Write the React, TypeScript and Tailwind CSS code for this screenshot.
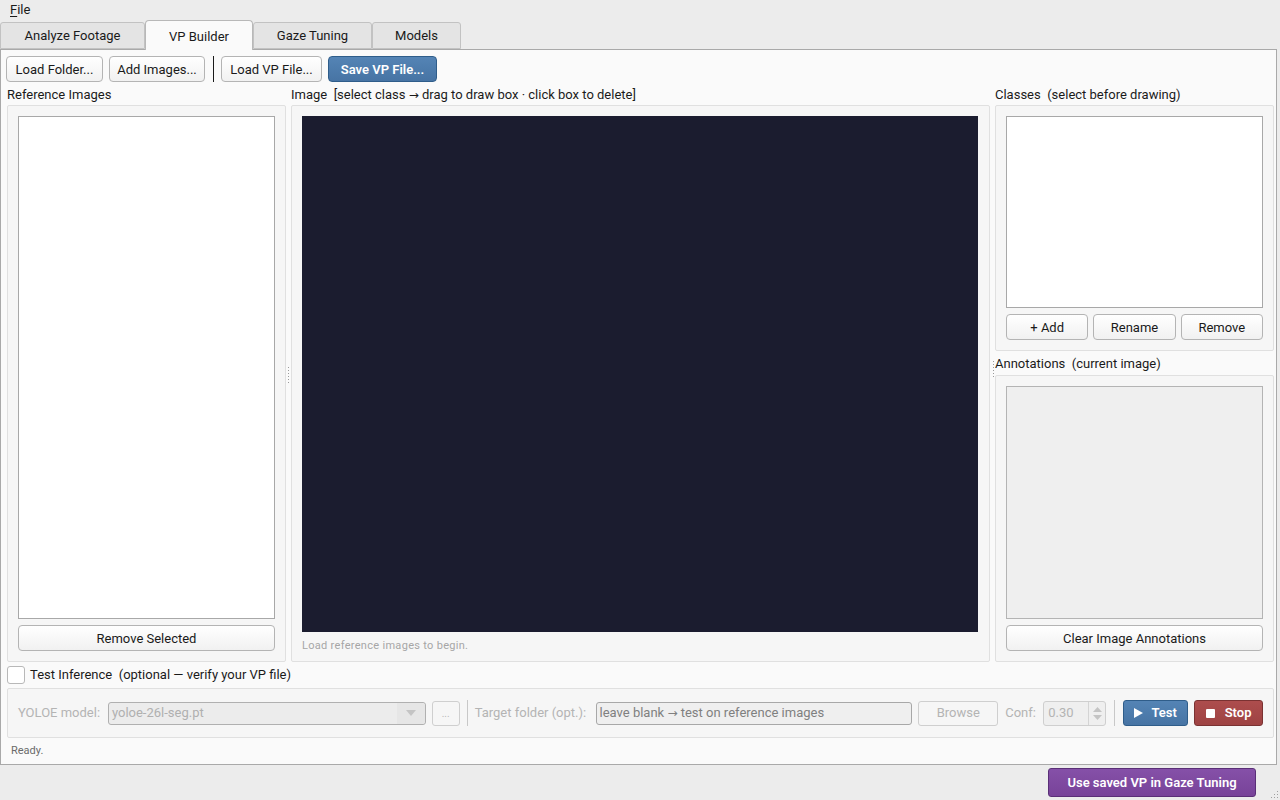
import React from 'react';

const btn =
  'h-[26px] px-[9px] shrink-0 rounded-[4px] border border-[#b4b4b4] bg-gradient-to-b from-white to-[#f1f1f1] text-[13px] text-[#1a1a1a] flex items-center justify-center leading-none whitespace-nowrap';

function Arrow() {
  return <span style={{ fontFamily: '"DejaVu Sans", sans-serif' }} className="text-[12px]">→</span>;
}

function Tab({ label, active, width }: { label: string; active?: boolean; width: string }) {
  return active ? (
    <div className={`${width} h-[30px] -mb-px bg-[#fafafa] border border-b-0 border-[#b8b8b8] rounded-t-[4px] flex items-center justify-center pt-[2px] text-[13px] text-[#1a1a1a] z-10`}>
      {label}
    </div>
  ) : (
    <div className={`${width} h-[27px] bg-[#e4e4e4] border border-[#c2c2c2] rounded-t-[3px] flex items-center justify-center pt-[1px] text-[13px] text-[#1a1a1a]`}>
      {label}
    </div>
  );
}

function Dots() {
  return (
    <div className="flex flex-col gap-[2px]">
      {[0, 1, 2, 3, 4, 5].map((i) => (
        <div key={i} className="w-px h-px bg-[#9a9a9a]" />
      ))}
    </div>
  );
}

export default function App() {
  return (
    <div
      className="w-[1280px] h-[800px] bg-[#ececec] flex flex-col text-[#1a1a1a] text-[13px] whitespace-nowrap"
      style={{ fontFamily: 'Roboto, "Liberation Sans", sans-serif' }}
    >
      {/* Menu bar */}
      <div className="h-[20px] flex items-center px-[10px] text-[13px]">
        <span>
          <span className="underline underline-offset-2">F</span>ile
        </span>
      </div>

      {/* Tabs */}
      <div className="h-[29px] flex items-end">
        <Tab label="Analyze Footage" width="w-[145px]" />
        <Tab label="VP Builder" width="w-[108px]" active />
        <Tab label="Gaze Tuning" width="w-[119px]" />
        <Tab label="Models" width="w-[89px]" />
      </div>

      {/* Tab pane */}
      <div className="w-[1277px] h-[716px] border border-[#a9a9a9] bg-[#fafafa] flex flex-col pl-[6px] pr-[2px]">
        {/* Toolbar */}
        <div className="h-[32px] pt-[6px] -ml-px flex items-start gap-[6px]">
          <button className={`${btn} w-[97px]`}>Load Folder...</button>
          <button className={`${btn} w-[96px]`}>Add Images...</button>
          <div className="w-px h-[26px] bg-[#1a1a1a] ml-[2px] mr-[1px]" />
          <button className={`${btn} w-[101px]`}>Load VP File...</button>
          <button className="h-[26px] w-[109px] rounded-[4px] border border-[#2f5d8a] bg-gradient-to-b from-[#5484b5] to-[#4774a4] text-white font-semibold text-[13px] leading-none">
            Save VP File...
          </button>
        </div>

        {/* Main panels */}
        <div className="flex h-[580px] pt-[5px]">
          {/* Left */}
          <div className="w-[279px] flex flex-col">
            <div className="h-[16px] leading-[16px]">Reference Images</div>
            <div className="mt-[2px] flex-1 border border-[#e0e0e0] rounded-[2px] bg-[#f6f6f6] p-[10px] flex flex-col">
              <div className="flex-1 bg-white border border-[#a8a8a8]" />
              <button className={`${btn} mt-[6px] w-full`}>Remove Selected</button>
            </div>
          </div>

          {/* Splitter */}
          <div className="w-[5px] flex items-center justify-center">
            <Dots />
          </div>

          {/* Center */}
          <div className="w-[699px] flex flex-col">
            <div className="h-[16px] leading-[16px] whitespace-pre">
              Image  [select class <Arrow /> drag to draw box · click box to delete]
            </div>
            <div className="mt-[2px] flex-1 border border-[#e0e0e0] rounded-[2px] bg-[#f6f6f6] pt-[10px] pl-[10px] pr-[11px] flex flex-col">
              <div className="w-[676px] h-[516px] bg-[#1b1c2f]" />
              <div className="mt-[6px] text-[11px] text-[#a6a6a6] tracking-[0.3px]">Load reference images to begin.</div>
            </div>
          </div>

          {/* Splitter */}
          <div className="w-[5px]" />

          {/* Right */}
          <div className="w-[279px] flex flex-col">
            <div className="h-[16px] leading-[16px] whitespace-pre">Classes  (select before drawing)</div>
            <div className="mt-[2px] h-[246px] border border-[#e0e0e0] rounded-[2px] bg-[#f6f6f6] p-[10px] flex flex-col">
              <div className="flex-1 bg-white border border-[#a8a8a8]" />
              <div className="mt-[6px] flex gap-[5px]">
                <button className={`${btn} flex-1`}>+ Add</button>
                <button className={`${btn} flex-1`}>Rename</button>
                <button className={`${btn} flex-1`}>Remove</button>
              </div>
            </div>
            <div className="h-[16px] mt-[5px] leading-[16px] whitespace-pre relative">
              <div className="absolute -left-[2px] top-[5px]">
                <Dots />
              </div>
              Annotations  (current image)
            </div>
            <div className="mt-[3px] flex-1 border border-[#e0e0e0] rounded-[2px] bg-[#f6f6f6] p-[10px] flex flex-col">
              <div className="flex-1 bg-[#efefef] border border-[#b4b4b4]" />
              <button className={`${btn} mt-[6px] w-full`}>Clear Image Annotations</button>
            </div>
          </div>
        </div>

        {/* Test inference checkbox */}
        <div className="h-[26px] flex items-center gap-[5px]">
          <div className="w-[18px] h-[18px] bg-white border border-[#b8b8b8] rounded-[3px]" />
          <span className="whitespace-pre">Test Inference  (optional — verify your VP file)</span>
        </div>

        {/* Inference group */}
        <div className="w-[1267px] h-[50px] border border-[#e0e0e0] rounded-[2px] bg-[#f6f6f6] px-[10px] flex items-center">
          <span className="w-[90px] text-[#b4b4b4]">YOLOE model:</span>
          <div className="w-[318px] h-[23px] border border-[#b0b0b0] rounded-[3px] bg-[#ececec] flex items-center">
            <span className="flex-1 pl-[3px] text-[#b0b0b0]">yoloe-26l-seg.pt</span>
            <div className="w-[28px] h-full flex items-center justify-center bg-[#e6e6e6] rounded-r-[3px]">
              <svg width="10" height="6" viewBox="0 0 10 6">
                <path d="M0 0 L10 0 L5 6 Z" fill="#c4c4c4" />
              </svg>
            </div>
          </div>
          <div className="ml-[6px] w-[28px] h-[25px] border border-[#cfcfcf] rounded-[3px] bg-[#f6f6f6] flex items-center justify-center text-[#b8b8b8] text-[10px]">
            ...
          </div>
          <div className="mx-[7px] w-px h-[26px] bg-[#c8c8c8]" />
          <span className="w-[121px] text-[#b4b4b4]">Target folder (opt.):</span>
          <div className="w-[317px] h-[23px] border border-[#a8a8a8] rounded-[3px] bg-[#efefef] flex items-center pl-[3px] text-[#808080] whitespace-pre">
            leave blank <Arrow /> test on reference images
          </div>
          <div className="ml-[6px] w-[80px] h-[25px] border border-[#cfcfcf] rounded-[3px] bg-[#f6f6f6] flex items-center justify-center text-[#b4b4b4]">
            Browse
          </div>
          <span className="ml-[7px] w-[38px] text-[#b4b4b4]">Conf:</span>
          <div className="w-[63px] h-[25px] border border-[#cfcfcf] rounded-[3px] bg-[#efefef] flex items-center">
            <span className="flex-1 pl-[4px] text-[#b4b4b4]">0.30</span>
            <div className="w-[17px] h-full border-l border-[#d4d4d4] flex flex-col items-center justify-center gap-[3px]">
              <svg width="9" height="5" viewBox="0 0 9 5">
                <path d="M0 5 L4.5 0 L9 5 Z" fill="#c4c4c4" />
              </svg>
              <svg width="9" height="5" viewBox="0 0 9 5">
                <path d="M0 0 L4.5 5 L9 0 Z" fill="#c4c4c4" />
              </svg>
            </div>
          </div>
          <div className="mx-[8px] w-px h-[26px] bg-[#c8c8c8]" />
          <button className="w-[65px] h-[26px] rounded-[3px] border border-[#2f5d8a] bg-gradient-to-b from-[#5484b5] to-[#4774a4] text-white font-semibold flex items-center justify-center gap-[8px]">
            <svg width="9" height="10" viewBox="0 0 9 10">
              <path d="M0 0 L9 5 L0 10 Z" fill="white" />
            </svg>
            Test
          </button>
          <button className="ml-[6px] w-[69px] h-[26px] rounded-[3px] border border-[#7a3232] bg-gradient-to-b from-[#ad4d4d] to-[#9e4343] text-white font-semibold flex items-center justify-center gap-[10px]">
            <div className="w-[9px] h-[9px] bg-white rounded-[1px]" />
            Stop
          </button>
        </div>

        {/* Status */}
        <div className="h-[26px] flex items-center pl-[4px] text-[11px] text-[#6a6a6a]">Ready.</div>
      </div>

      {/* Footer */}
      <div className="flex-1 flex justify-end items-start pt-[3px] pr-[24px] relative">
        <button className="w-[208px] h-[29px] rounded-[3px] border border-[#5a2f77] bg-gradient-to-b from-[#8550a8] to-[#784399] text-white font-semibold text-[13px]">
          Use saved VP in Gaze Tuning
        </button>
        <svg className="absolute right-[1px] bottom-[1px]" width="10" height="10" viewBox="0 0 10 10">
          {[
            [8, 2], [8, 5], [8, 8], [5, 5], [5, 8], [2, 8],
          ].map(([x, y], i) => (
            <rect key={i} x={x} y={y} width="1" height="1" fill="#a0a0a0" />
          ))}
        </svg>
      </div>
    </div>
  );
}
